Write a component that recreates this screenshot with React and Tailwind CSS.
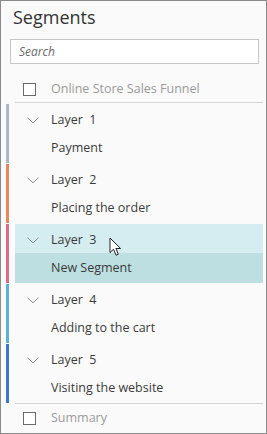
import React from "react";

const groups = [
  { n: 1, item: "Payment", color: "bg-[#aab9c6]" },
  { n: 2, item: "Placing the order", color: "bg-[#e8875b]" },
  { n: 3, item: "New Segment", color: "bg-[#d96b8b]", active: true },
  { n: 4, item: "Adding to the cart", color: "bg-[#5db0d2]" },
  { n: 5, item: "Visiting the website", color: "bg-[#3b78c9]" },
];

function Chevron() {
  return (
    <svg width="12" height="7" viewBox="0 0 12 7" className="shrink-0">
      <path d="M0.5 0.8 L6 5.8 L11.5 0.8" fill="none" stroke="#8a8a8a" strokeWidth="1" />
    </svg>
  );
}

function Checkbox() {
  return <div className="w-[13px] h-[13px] border border-[#6b6b6b] bg-white shrink-0" />;
}

export default function App() {
  return (
    <div
      className="relative w-[267px] h-[434px] border border-[#8a8a8a] bg-[#fafafa] overflow-hidden"
      style={{ fontFamily: '"Open Sans", "Noto Sans", sans-serif' }}
    >
      <div className="pt-[4px] pl-[12px] h-[28px] text-[18px] leading-[24px] text-[#333]">Segments</div>
      <div className="mt-[10px] ml-[9px] w-[249px] h-[25px] border border-[#c6c6c6] bg-white flex items-center pl-[8px]">
        <span className="italic text-[12px] text-[#6a6a6a]">Search</span>
      </div>
      <div className="flex items-center pt-[18px] pb-[6px] pl-[22px] h-[38px]">
        <Checkbox />
        <span className="ml-[15px] text-[12.5px] leading-[14px] text-[#9a9a9a]">Online Store Sales Funnel</span>
      </div>
      <div className="ml-[14px] w-[248px] h-px bg-[#d4d4d4]" />
      <div>
        {groups.map((g) => (
          <div key={g.n} className="flex h-[60px]">
            <div className={`ml-[5px] mt-px w-[3px] h-[59px] ${g.color}`} />
            <div className="ml-[6px] w-[248px] pt-px flex flex-col">
              <div
                className={`h-[29px] pt-[3px] flex items-center pl-[12px] text-[12.5px] text-[#3a3a3a] ${
                  g.active ? "bg-[#d5ecf0]" : ""
                }`}
              >
                <Chevron />
                <span className="ml-[12px] whitespace-pre">{`Layer  ${g.n}`}</span>
              </div>
              <div
                className={`h-[30px] flex items-center pl-[36px] text-[12.5px] text-[#3a3a3a] ${
                  g.active ? "bg-[#bddfe2]" : ""
                }`}
              >
                {g.item}
              </div>
            </div>
          </div>
        ))}
      </div>
      <div className="ml-[14px] w-[248px] h-px bg-[#d4d4d4]" />
      <div className="flex items-center h-[28px] pl-[22px]">
        <Checkbox />
        <span className="ml-[15px] text-[12.5px] text-[#9a9a9a]">Summary</span>
      </div>
      <svg
        className="absolute left-[108px] top-[236px]"
        width="14"
        height="20"
        viewBox="0 0 14 20"
      >
        <path
          d="M1 1 L1 15.5 L4.5 12.3 L7 18.2 L9.3 17.2 L6.9 11.5 L11.6 11.5 Z"
          fill="#fff"
          stroke="#222"
          strokeWidth="1"
          strokeLinejoin="miter"
        />
      </svg>
    </div>
  );
}
